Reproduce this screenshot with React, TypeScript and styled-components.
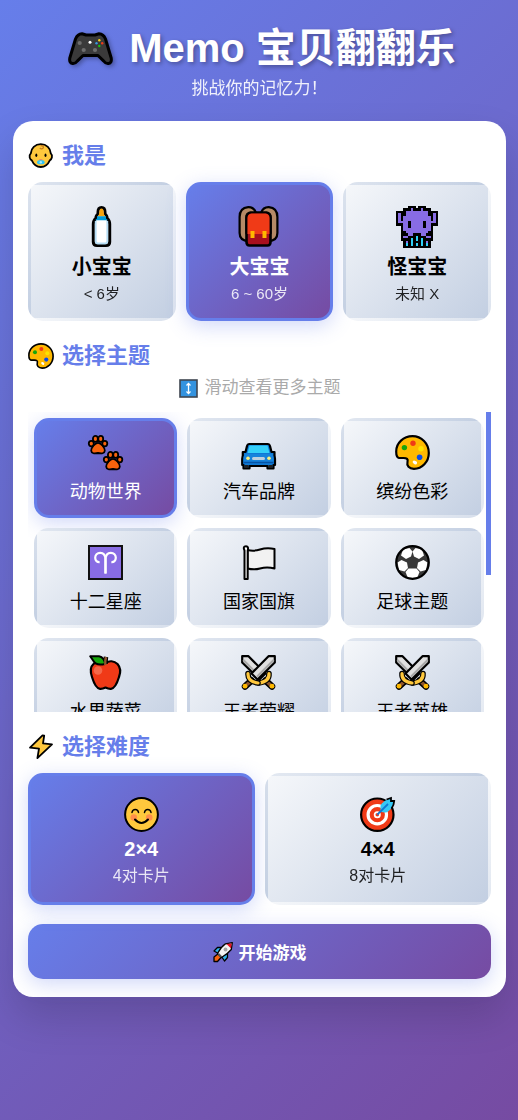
import React, { useState } from "react";
import styled, { createGlobalStyle, css } from "styled-components";

const GlobalStyle = createGlobalStyle`
  * { box-sizing: border-box; }
  body {
    margin: 0;
    min-height: 100vh;
    background: linear-gradient(135deg, #667eea 0%, #764ba2 100%);
    font-family: "Liberation Sans", Arial, "Noto Sans CJK SC", sans-serif;
    color: #000;
  }
`;

/* ---------- drawings ---------- */

const Svg = styled.svg<{ $size: number }>`
  display: block;
  flex: none;
  width: ${(p) => p.$size}px;
  height: ${(p) => p.$size}px;
  overflow: visible;
`;

const monsterRows = [
  ".....BBB.BBB.....",
  "...BBBPBBBPBBB...",
  "BBBBPPPPPPPPPBBBB",
  "BPBBPPPPPPPPPBBPB",
  "BPBPPPPPPPPPPPBPB",
  "BPBPPPPPPPPPPPBPB",
  "BPPPPBPPPPPBPPPPB",
  "BBBPPBPPPPPBPPBBB",
  "..BPPBPPPPPBPPB..",
  "..BPPPPPPPPPPPB..",
  "..BBPPPPPPPPPBB..",
  "..BBBPPBBBPPBBB..",
  "..BPPBBBCBBBPPB..",
  "..BBBBCBCBCBBBB..",
  "...BPBCBBBCBPB...",
  "...BCBCBCBCBCB...",
  "...BBBBBBBBBBB...",
];
const monsterColors: Record<string, string> = { B: "#000", P: "#886ce4", C: "#2fd0f7" };

const paw = (
  <g fill="#f7630c" stroke="#000" strokeWidth="1.8">
    <path d="M10 7.8C6.800 7.800 3 13 3.200 15.800C3.400 18.600 6.500 18.800 10 18C13.500 18.800 16.600 18.600 16.800 15.800C17 13 13.200 7.800 10 7.800Z" />
    <ellipse cx="3.300" cy="8.600" rx="2.500" ry="2.800" />
    <ellipse cx="7.400" cy="3.900" rx="2.500" ry="3" />
    <ellipse cx="12.700" cy="3.900" rx="2.500" ry="3" />
    <ellipse cx="16.800" cy="8.600" rx="2.500" ry="2.800" />
  </g>
);

const sword = (
  <g strokeLinejoin="round">
    <path d="M1.200 1.200H7.500L24.500 18.500L18.500 24.500L1.200 7.500Z" fill="#e0e0e0" stroke="#000" strokeWidth="2.200" />
    <path d="M2.300 5L19 21.700" stroke="#a8a8a8" strokeWidth="2.200" />
    <path d="M24.500 25.500L31 31.500" stroke="#000" strokeWidth="6.500" strokeLinecap="round" />
    <path d="M24 25L30 30.500" stroke="#8e562e" strokeWidth="3.400" />
    <circle cx="31" cy="31.200" r="2.400" fill="#ffb900" />
    <path d="M28 18.500Q28.500 26.500 18 28" fill="none" stroke="#000" strokeWidth="5.600" strokeLinecap="round" />
    <path d="M28 18.500Q28.500 26.500 18 28" fill="none" stroke="#ffc83d" strokeWidth="3.200" strokeLinecap="round" />
  </g>
);

const ariesCurl = "M17.500 28.500V14.500C17.500 10 15.500 7.800 12.200 7.800C9.200 7.800 7.200 10 7.200 12.800C7.200 15.800 9.200 17.300 11.600 17.100";

const drawings = {
  gamepad: {
    box: 54,
    art: (
      <>
        <path
          d="M12.5 18Q14.5 13 19 12.8L23 14H32L36 12.8Q40.5 13 42.5 18L48.2 37Q49 42 45.5 42.5Q43 43 40.5 39.8L35 34.5H20L14.5 39.8Q12 43 9.5 42.5Q6 42 6.8 37Z"
          fill="#3a3a3a"
          stroke="#000"
          strokeWidth="3"
          strokeLinejoin="round"
        />
        <g fill="#6e6e6e">
          <circle cx="16.7" cy="22" r="2.1" />
          <circle cx="20.7" cy="29" r="2.1" />
          <circle cx="32" cy="29" r="2.1" />
        </g>
        <circle cx="27" cy="21.3" r="1.5" fill="#fff" />
        <circle cx="36.3" cy="19.3" r="1.2" fill="#fcd116" />
        <circle cx="39.2" cy="22.2" r="1.2" fill="#f03a17" />
        <circle cx="36.3" cy="25" r="1.2" fill="#16c60c" />
        <circle cx="33.5" cy="22.2" r="1.2" fill="#3a96dd" />
      </>
    ),
  },
  baby: {
    box: 26,
    art: (
      <>
        <path
          d="M12.8 1.2C18.5 1.2 22.6 5.2 22.8 10.4Q24.6 12 23.9 14.6Q23.4 16.6 21.8 17.4C20 21.5 16.8 24 12.8 24C8.800 24 5.600 21.5 3.800 17.4Q2.200 16.6 1.700 14.6Q1.100 12 2.800 10.4C3 5.200 7.100 1.200 12.800 1.200Z"
          fill="#ffc83d"
          stroke="#000"
          strokeWidth="1.8"
        />
        <path d="M12.5 2.500Q16.500 3 15 5.200Q13.500 6.500 11.800 5" fill="none" stroke="#c67b1c" strokeWidth="1.300" />
        <ellipse cx="8.300" cy="12.300" rx="1" ry="1.800" />
        <ellipse cx="17.500" cy="12.300" rx="1" ry="1.800" />
        <path d="M10.500 17.300Q12.800 14.500 15.200 17.300Z" fill="#e8836b" />
        <rect x="9" y="17.300" width="7.600" height="4" rx="2" fill="#2fc4f5" />
        <circle cx="12.800" cy="19.300" r="1.200" fill="#a6e8ff" />
      </>
    ),
  },
  palette: {
    box: 35,
    art: (
      <>
        <path
          d="M17.5 1.200C26.500 1.200 33.800 8.500 33.800 18C33.800 27 27 33.800 19 33.800C14 33.800 11.500 30.500 12.500 27C13.300 24 11.800 23 8.500 23H4C1.600 22.500 1.200 19 1.200 16.500C1.200 8 8.500 1.200 17.500 1.200Z"
          fill="#ffb900"
          stroke="#000"
          strokeWidth="2.2"
        />
        <circle cx="9.400" cy="12.600" r="2.700" fill="#16a60c" />
        <circle cx="18" cy="8.200" r="2.700" fill="#f03a17" />
        <circle cx="26" cy="13.700" r="2.700" fill="#fde300" />
        <circle cx="24.600" cy="22.300" r="2.800" fill="#0c4ce4" />
        <path d="M17.500 27Q18.500 24.800 20.500 26Q23 27 21.500 29.300Q19.500 30.500 17.500 27Z" fill="#fff" />
      </>
    ),
  },
  bolt: {
    box: 26,
    art: (
      <path
        d="M14.500 1.300L2 13.600L11 14.600L9.400 24.200L24 10.400L15 9.400L16.200 1.600Z"
        fill="#ffc83d"
        stroke="#000"
        strokeWidth="1.8"
        strokeLinejoin="round"
      />
    ),
  },
  bottle: {
    box: 42,
    art: (
      <>
        <path
          d="M20.500 1.500C18 1.500 17 3.500 17 6V8Q15 9 14.800 12.500Q12.300 14.500 12.300 18V36Q12.300 39.500 16 39.500H25Q28.700 39.500 28.700 36V18Q28.700 14.500 26.200 12.500Q26 9 24 8V6C24 3.500 23 1.500 20.500 1.500Z"
          fill="#fff"
          stroke="#000"
          strokeWidth="3"
        />
        <path d="M20.500 2.500Q18.300 2.500 18.300 6.500Q18.200 9 16.500 10.500H24.500Q22.800 9 22.700 6.500Q22.700 2.500 20.500 2.500Z" fill="#f7a30c" />
        <path d="M16 10.200H25V12.500L27 14.300H14L16 12.500Z" fill="#0099d8" />
        <path d="M14.700 15V35Q14.700 37.500 17 37.500H24Q26.300 37.500 26.300 35V15" fill="none" stroke="#b5ddf5" strokeWidth="1.800" />
      </>
    ),
  },
  backpack: {
    box: 42,
    art: (
      <>
        {["#000", "#b58a66"].map((color, i) => (
          <g key={color} fill="none" stroke={color} strokeWidth={i ? 4.6 : 9}>
            <path d="M14.500 7.500Q13.500 4.500 10.500 4.500Q5 5 5 11V27Q5 31.500 11 32" />
            <path d="M26.500 7.500Q27.500 4.500 30.500 4.500Q36 5 36 11V27Q36 31.500 30 32" />
          </g>
        ))}
        <path d="M12.500 6.500H28.500Q32.500 7 32.500 12V36Q32.500 39.500 29.500 39.500H11.500Q8.500 39.500 8.500 36V12Q8.500 7 12.500 6.500Z" fill="#a80f1e" stroke="#000" strokeWidth="2.600" />
        <path d="M13.500 7.500H27.500Q31.500 8 31.500 12V28H9.500V12Q9.500 8 13.500 7.500Z" fill="#f03a17" />
        <rect x="12.500" y="25" width="4" height="7" fill="#ffb900" />
        <rect x="24.500" y="25" width="4" height="7" fill="#ffb900" />
      </>
    ),
  },
  monster: {
    box: 17,
    art: (
      <g shapeRendering="crispEdges">
        {monsterRows.flatMap((row, y) =>
          row.split("").map((cell, x) =>
            cell === "." ? null : <rect key={`${x}-${y}`} x={x} y={y} width="1" height="1" fill={monsterColors[cell]} />
          )
        )}
      </g>
    ),
  },
  paws: {
    box: 35,
    art: (
      <>
        {paw}
        <g transform="translate(15 16)">{paw}</g>
      </>
    ),
  },
  car: {
    box: 35,
    art: (
      <g strokeLinejoin="round">
        <path
          d="M8 9H27Q28.500 9 29 11L30.500 17H33.500V20.500L34 24V30H32.500V33.500H26.500V31H8.500V33.500H2.500V30H1.200V24L1.800 20.500V17H4.500L6 11Q6.500 9 8 9Z"
          fill="#0f78d4"
          stroke="#000"
          strokeWidth="2.2"
        />
        <path d="M8.500 10.500H26.500L28.500 18H6.500Z" fill="#35d0f9" />
        <path d="M4 19H31L32.500 22V28.500H2.500V22Z" fill="#1683dc" />
        <rect x="11" y="22" width="13" height="3" rx="1.500" fill="#bdd0df" />
        <path d="M2.500 27.500H32.500" stroke="#0753a5" strokeWidth="1.500" />
        <path d="M3.500 31.500H7.500M27.500 31.500H31.500" stroke="#222" strokeWidth="3" />
        <circle cx="7" cy="23.300" r="1.800" fill="#fff27a" />
        <circle cx="28" cy="23.300" r="1.800" fill="#fff27a" />
      </g>
    ),
  },
  aries: {
    box: 35,
    art: (
      <>
        <rect x="1" y="1" width="33" height="33" fill="#886ce4" stroke="#111" strokeWidth="2" />
        <g fill="none" stroke="#fff" strokeWidth="2.2">
          <path d={ariesCurl} />
          <path d={ariesCurl} transform="translate(35 0) scale(-1 1)" />
        </g>
      </>
    ),
  },
  flag: {
    box: 35,
    art: (
      <g stroke="#000" strokeWidth="2" strokeLinejoin="round">
        <path d="M6.500 5Q13 6.500 19 4.500Q26 2.200 33.500 4V23.500Q26 21.500 19 23.500Q13 25.200 6.500 23.500Z" fill="#f2f2f2" />
        <path d="M3.500 34V5.500Q1.500 1.200 5 1.200Q8 1.200 6.700 5.500V34Z" fill="#fff" />
      </g>
    ),
  },
  football: {
    box: 35,
    art: (
      <>
        <circle cx="17.500" cy="17.500" r="16.300" fill="#383838" />
        <g fill="#fff">
          <path d="M8 4.500L14.500 3L17.500 6.500L16 11.500L11 14L6 10.500Z" />
          <path d="M27 4.500L20.500 3L17.500 6.500L19 11.500L24 14L29 10.500Z" />
          <path d="M2.500 17.500L6.500 15L12 17.500L13 23L9.500 26.500L4 25Z" />
          <path d="M32.500 17.500L28.500 15L23 17.500L22 23L25.500 26.500L31 25Z" />
          <path d="M13.500 23.500H21.500L24.500 27L22.500 32L17.500 33L12.500 32L10.500 27Z" />
        </g>
        <circle cx="17.500" cy="17.500" r="16.300" fill="none" stroke="#000" strokeWidth="2.2" />
      </>
    ),
  },
  apple: {
    box: 35,
    art: (
      <g strokeLinejoin="round">
        <path
          d="M17.500 8C21 5.500 26 5.500 29.500 9C33 13 32.500 18 31 22C29.500 27 26.500 33.500 23 33.800Q20.500 34 17.500 32.500Q14.500 34 12 33.800C8.500 33.500 5.500 27 4 22C2 16 2 12 5.500 9C9 6 14 5.500 17.500 8Z"
          fill="#f03a17"
          stroke="#000"
          strokeWidth="2.2"
        />
        <path d="M17.500 9Q17.500 5 18 1.800" fill="none" stroke="#000" strokeWidth="4.500" />
        <path d="M2.200 1.200H11Q16.500 2.500 17 9Q8 11 5.500 6Z" fill="#16a60c" stroke="#000" strokeWidth="2" />
        <path d="M17.300 10Q17 5 18 2" fill="none" stroke="#8e562e" strokeWidth="2.400" />
        <circle cx="10" cy="15.500" r="4.300" fill="#f4694a" />
      </g>
    ),
  },
  swords: {
    box: 35,
    art: (
      <>
        {sword}
        <g transform="translate(35 0) scale(-1 1)">{sword}</g>
      </>
    ),
  },
  smile: {
    box: 35,
    art: (
      <>
        <circle cx="17.500" cy="17.500" r="16.400" fill="#ffc83d" stroke="#000" strokeWidth="2" />
        <circle cx="9.800" cy="20.500" r="3.300" fill="#ff8f4a" />
        <circle cx="25.200" cy="20.500" r="3.300" fill="#ff8f4a" />
        <g fill="none" stroke="#000" strokeWidth="1.500" strokeLinecap="round">
          <path d="M8 15.500Q8.500 12.500 11.300 12.500Q14 12.500 14.500 15.500" />
          <path d="M20.500 15.500Q21 12.500 23.700 12.500Q26.500 12.500 27 15.500" />
          <path d="M11 22.500Q17.500 29.500 24 22.500" strokeWidth="2" />
        </g>
      </>
    ),
  },
  target: {
    box: 35,
    art: (
      <>
        <circle cx="17.300" cy="17.700" r="16.200" fill="#f03a17" stroke="#000" strokeWidth="2.2" />
        <circle cx="17.300" cy="17.700" r="9.200" fill="none" stroke="#fff" strokeWidth="3.200" />
        <circle cx="17.300" cy="17.700" r="3.500" fill="#fff" />
        <circle cx="17.300" cy="17.700" r="1.800" fill="#f03a17" />
        <path
          d="M20.500 14.500V8.500Q23 3.500 31 1.200V4H34Q33.500 11 27 15.300Q23.500 15.800 20.500 14.500Z"
          fill="#35c8f5"
        />
        <path d="M26.500 2.500L31 1V4H34.200Q34 8 31.500 11.500" fill="none" stroke="#000" strokeWidth="1.800" />
        <path d="M17.300 17.700L28 7" stroke="#0f78d4" strokeWidth="1.800" />
      </>
    ),
  },
  scroll: {
    box: 19,
    art: (
      <>
        <rect x="1" y="1" width="17" height="17" fill="#3393df" stroke="#3f4650" strokeWidth="1.600" />
        <g stroke="#fff" strokeWidth="1.300" fill="none">
          <path d="M9.500 5V14" />
          <path d="M7.500 6.500L9.500 4.500L11.500 6.500M7.500 12.500L9.500 14.500L11.500 12.500" />
        </g>
      </>
    ),
  },
  rocket: {
    box: 20,
    art: (
      <g strokeLinejoin="round">
        <path d="M5.500 11.500L1 15V19.500H4.500L8.500 15Z" fill="#f7630c" stroke="#000" strokeWidth="1.300" />
        <path d="M8.500 5.500H4.500L1 9L5.500 11.500ZM14.500 11.500V15.500L11.500 19L8.500 14.500Z" fill="#2fb4ee" stroke="#000" strokeWidth="1.300" />
        <path d="M19.300 .7L18.300 7.500Q14.500 12 8.500 15.500L4.500 11.500Q8 5 12.500 1.800Z" fill="#f4f4f4" stroke="#000" strokeWidth="1.300" />
        <path d="M18.600 1.400L18 6.500L13.500 2Z" fill="#e81224" />
        <path d="M5.500 12L8 14.700" stroke="#555" strokeWidth="2" />
        <circle cx="12.500" cy="7.500" r="1.900" fill="#a5a5a5" />
      </g>
    ),
  },
};

type IconName = keyof typeof drawings;

const Icon = ({ name, size }: { name: IconName; size: number }) => {
  const { box, art } = drawings[name];
  return (
    <Svg $size={size} viewBox={`0 0 ${box} ${box}`} aria-hidden="true">
      {art}
    </Svg>
  );
};

/* ---------- layout ---------- */

const Page = styled.div`
  padding: 21px 12px 20px 13px;
`;

const Header = styled.header`
  margin-bottom: 21px;
  text-align: center;
  color: #fff;
`;

const Title = styled.h1`
  display: flex;
  align-items: center;
  justify-content: center;
  gap: 12px;
  margin: 0 0 3px;
  font-size: 40px;
  line-height: 54px;
  text-shadow: 2px 2px 4px rgba(0, 0, 0, 0.3);

  svg {
    filter: drop-shadow(2px 2px 2px rgba(0, 0, 0, 0.3));
  }
`;

const Subtitle = styled.p`
  margin: 0;
  font-size: 17px;
  line-height: 22px;
  opacity: 0.9;
`;

const Panel = styled.main`
  padding: 19px 15px 18px;
  border-radius: 20px;
  background: #fff;
  box-shadow: 0 20px 40px rgba(0, 0, 0, 0.15);
`;

const Section = styled.section`
  margin-bottom: 19px;
`;

const Heading = styled.h2`
  display: flex;
  align-items: center;
  gap: 8px;
  margin: 0 0 10px;
  color: #667eea;
  font-size: 22px;
  line-height: 32px;
`;

const Grid = styled.div<{ $columns: number }>`
  display: grid;
  grid-template-columns: repeat(${(p) => p.$columns}, minmax(0, 1fr));
  gap: 10px;
`;

const selectedLook = css`
  border-color: #667eea;
  background-image: linear-gradient(135deg, #667eea 0%, #764ba2 100%);
  box-shadow: 0 5px 20px rgba(102, 126, 234, 0.3);
  color: #fff;
`;

const Choice = styled.button<{ $selected: boolean; $compact?: boolean }>`
  display: flex;
  flex-direction: column;
  align-items: center;
  padding: ${(p) => (p.$compact ? "10px" : "15px")};
  border: 3px solid transparent;
  border-radius: 15px;
  background-image: linear-gradient(135deg, #f5f7fa 0%, #c3cfe2 100%);
  color: #000;
  font-family: inherit;
  cursor: pointer;
  ${(p) => p.$selected && selectedLook}
`;

const IconSlot = styled.span<{ $height: number }>`
  display: flex;
  align-items: center;
  height: ${(p) => p.$height}px;
`;

const ChoiceTitle = styled.strong<{ $line: number }>`
  font-size: 20px;
  line-height: ${(p) => p.$line}px;
`;

const ChoiceNote = styled.span<{ $size: number; $line: number }>`
  margin-top: 4px;
  font-size: ${(p) => p.$size}px;
  line-height: ${(p) => p.$line}px;
  opacity: 0.85;
`;

const ThemeName = styled.span`
  margin-top: 6px;
  font-size: 18px;
  line-height: 26px;
`;

const Hint = styled.p`
  display: flex;
  align-items: center;
  justify-content: center;
  gap: 7px;
  margin: -7px 0 11px;
  color: #aaa;
  font-size: 17px;
  line-height: 26px;
`;

const ThemeScroller = styled.div`
  display: flex;
  height: 300px;
`;

const ThemeViewport = styled.div`
  flex: 1;
  min-width: 0;
  padding: 6px 2px 6px 6px;
  overflow-y: auto;
  scrollbar-width: none;
`;

const ScrollTrack = styled.div`
  flex: none;
  width: 5px;
`;

const ScrollThumb = styled.div`
  height: 163px;
  background: #667eea;
`;

const StartButton = styled.button`
  display: flex;
  align-items: center;
  justify-content: center;
  gap: 6px;
  width: 100%;
  height: 55px;
  padding: 0;
  border: 0;
  border-radius: 15px;
  background: linear-gradient(135deg, #667eea 0%, #764ba2 100%);
  box-shadow: 0 5px 20px rgba(102, 126, 234, 0.3);
  color: #fff;
  font-family: inherit;
  font-size: 17px;
  font-weight: bold;
  cursor: pointer;
`;

/* ---------- data ---------- */

const players: { icon: IconName; title: string; note: string }[] = [
  { icon: "bottle", title: "小宝宝", note: "< 6岁" },
  { icon: "backpack", title: "大宝宝", note: "6 ~ 60岁" },
  { icon: "monster", title: "怪宝宝", note: "未知 X" },
];

const themes: { icon: IconName; name: string }[] = [
  { icon: "paws", name: "动物世界" },
  { icon: "car", name: "汽车品牌" },
  { icon: "palette", name: "缤纷色彩" },
  { icon: "aries", name: "十二星座" },
  { icon: "flag", name: "国家国旗" },
  { icon: "football", name: "足球主题" },
  { icon: "apple", name: "水果蔬菜" },
  { icon: "swords", name: "王者荣耀" },
  { icon: "swords", name: "王者英雄" },
];

const levels: { icon: IconName; title: string; note: string }[] = [
  { icon: "smile", title: "2×4", note: "4对卡片" },
  { icon: "target", title: "4×4", note: "8对卡片" },
];

export default function App() {
  const [player, setPlayer] = useState(1);
  const [theme, setTheme] = useState(0);
  const [level, setLevel] = useState(0);

  return (
    <>
      <GlobalStyle />
      <Page>
        <Header>
          <Title>
            <Icon name="gamepad" size={54} />
            Memo 宝贝翻翻乐
          </Title>
          <Subtitle>挑战你的记忆力！</Subtitle>
        </Header>

        <Panel>
          <Section>
            <Heading>
              <Icon name="baby" size={26} />
              我是
            </Heading>
            <Grid $columns={3}>
              {players.map((p, i) => (
                <Choice key={p.title} type="button" $selected={i === player} aria-pressed={i === player} onClick={() => setPlayer(i)}>
                  <IconSlot $height={54}>
                    <Icon name={p.icon} size={42} />
                  </IconSlot>
                  <ChoiceTitle $line={27}>{p.title}</ChoiceTitle>
                  <ChoiceNote $size={15} $line={18}>{p.note}</ChoiceNote>
                </Choice>
              ))}
            </Grid>
          </Section>

          <Section>
            <Heading>
              <Icon name="palette" size={26} />
              选择主题
            </Heading>
            <Hint>
              <Icon name="scroll" size={19} />
              滑动查看更多主题
            </Hint>
            <ThemeScroller>
              <ThemeViewport>
                <Grid $columns={3}>
                  {themes.map((t, i) => (
                    <Choice key={t.name} type="button" $compact $selected={i === theme} aria-pressed={i === theme} onClick={() => setTheme(i)}>
                      <IconSlot $height={42}>
                        <Icon name={t.icon} size={35} />
                      </IconSlot>
                      <ThemeName>{t.name}</ThemeName>
                    </Choice>
                  ))}
                </Grid>
              </ThemeViewport>
              <ScrollTrack>
                <ScrollThumb />
              </ScrollTrack>
            </ThemeScroller>
          </Section>

          <Section>
            <Heading>
              <Icon name="bolt" size={26} />
              选择难度
            </Heading>
            <Grid $columns={2}>
              {levels.map((l, i) => (
                <Choice key={l.title} type="button" $selected={i === level} aria-pressed={i === level} onClick={() => setLevel(i)}>
                  <IconSlot $height={46}>
                    <Icon name={l.icon} size={35} />
                  </IconSlot>
                  <ChoiceTitle $line={24}>{l.title}</ChoiceTitle>
                  <ChoiceNote $size={16} $line={22}>{l.note}</ChoiceNote>
                </Choice>
              ))}
            </Grid>
          </Section>

          <StartButton type="button">
            <Icon name="rocket" size={20} />
            开始游戏
          </StartButton>
        </Panel>
      </Page>
    </>
  );
}
